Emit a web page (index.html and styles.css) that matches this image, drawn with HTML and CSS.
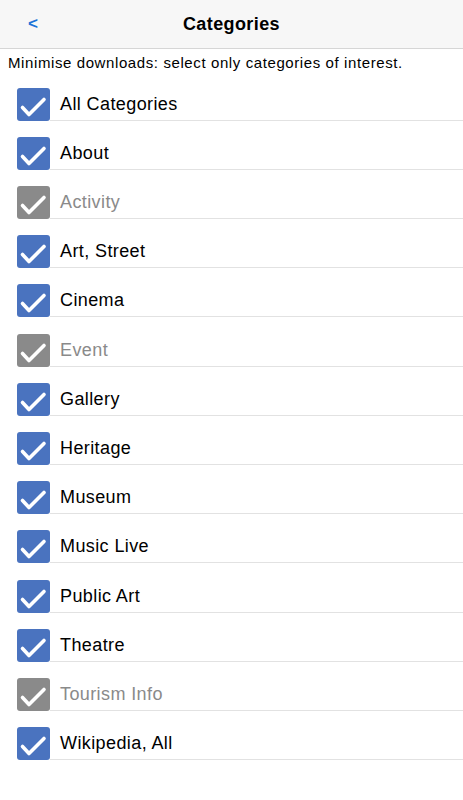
FILE: index.html
```html
<!DOCTYPE html>
<html lang="en">

<head>
    <meta charset="UTF-8">
    <meta name="viewport" content="width=device-width, initial-scale=1.0">
    <title>Categories</title>
    <link rel="stylesheet" href="styles.css">
</head>

<body>
    <div class="nav-bar">
        <span class="back">&lt;</span>
        <h1>Categories</h1>
    </div>

    <p class="hint">Minimise downloads: select only categories of interest.</p>

    <ul class="category-list">
        <li class="row"><span class="box"><svg viewBox="0 0 33 33"><path d="M5.5 19.5 L12 26.5 L27 11.5"/></svg></span><span class="label">All Categories</span></li>
        <li class="row"><span class="box"><svg viewBox="0 0 33 33"><path d="M5.5 19.5 L12 26.5 L27 11.5"/></svg></span><span class="label">About</span></li>
        <li class="row disabled"><span class="box"><svg viewBox="0 0 33 33"><path d="M5.5 19.5 L12 26.5 L27 11.5"/></svg></span><span class="label">Activity</span></li>
        <li class="row"><span class="box"><svg viewBox="0 0 33 33"><path d="M5.5 19.5 L12 26.5 L27 11.5"/></svg></span><span class="label">Art, Street</span></li>
        <li class="row"><span class="box"><svg viewBox="0 0 33 33"><path d="M5.5 19.5 L12 26.5 L27 11.5"/></svg></span><span class="label">Cinema</span></li>
        <li class="row disabled"><span class="box"><svg viewBox="0 0 33 33"><path d="M5.5 19.5 L12 26.5 L27 11.5"/></svg></span><span class="label">Event</span></li>
        <li class="row"><span class="box"><svg viewBox="0 0 33 33"><path d="M5.5 19.5 L12 26.5 L27 11.5"/></svg></span><span class="label">Gallery</span></li>
        <li class="row"><span class="box"><svg viewBox="0 0 33 33"><path d="M5.5 19.5 L12 26.5 L27 11.5"/></svg></span><span class="label">Heritage</span></li>
        <li class="row"><span class="box"><svg viewBox="0 0 33 33"><path d="M5.5 19.5 L12 26.5 L27 11.5"/></svg></span><span class="label">Museum</span></li>
        <li class="row"><span class="box"><svg viewBox="0 0 33 33"><path d="M5.5 19.5 L12 26.5 L27 11.5"/></svg></span><span class="label">Music Live</span></li>
        <li class="row"><span class="box"><svg viewBox="0 0 33 33"><path d="M5.5 19.5 L12 26.5 L27 11.5"/></svg></span><span class="label">Public Art</span></li>
        <li class="row"><span class="box"><svg viewBox="0 0 33 33"><path d="M5.5 19.5 L12 26.5 L27 11.5"/></svg></span><span class="label">Theatre</span></li>
        <li class="row disabled"><span class="box"><svg viewBox="0 0 33 33"><path d="M5.5 19.5 L12 26.5 L27 11.5"/></svg></span><span class="label">Tourism Info</span></li>
        <li class="row"><span class="box"><svg viewBox="0 0 33 33"><path d="M5.5 19.5 L12 26.5 L27 11.5"/></svg></span><span class="label">Wikipedia, All</span></li>
    </ul>
</body>

</html>
```

FILE: styles.css
```css
/* General */
body {
    font-family: 'Liberation Sans', Arial, sans-serif;
    margin: 0;
    padding: 0;
    background-color: #fff;
    color: #000;
}

.nav-bar {
    position: relative;
    height: 48px;
    background-color: #f7f7f7;
    border-bottom: 1px solid #d6d6d6;
    display: flex;
    align-items: center;
    justify-content: center;
}

.nav-bar h1 {
    margin: 0;
    font-size: 18px;
    font-weight: bold;
    letter-spacing: 0.4px;
}

.back {
    position: absolute;
    left: 28px;
    top: 14px;
    color: #1b73d8;
    font-size: 17px;
    font-weight: bold;
}

.hint {
    font-size: 15px;
    margin: 0;
    padding: 5px 0 0 8px;
    line-height: 17px;
    letter-spacing: 0.6px;
}

/* List */
.category-list {
    list-style: none;
    margin: 0;
    padding: 0;
}

.row {
    display: flex;
    align-items: flex-end;
    height: 49.23px;
    padding-left: 17px;
}

.row:first-child {
    height: 49.5px;
}

.box {
    width: 33px;
    height: 33px;
    border-radius: 3px;
    background-color: #4a73bf;
    flex-shrink: 0;
}

.box svg {
    display: block;
    width: 33px;
    height: 33px;
}

.box path {
    fill: none;
    stroke: #fff;
    stroke-width: 3.6;
    stroke-linecap: round;
    stroke-linejoin: round;
}

.label {
    flex: 1;
    height: 31px;
    display: flex;
    align-items: center;
    padding: 2px 0 0 10px;
    font-size: 18px;
    letter-spacing: 0.4px;
    border-bottom: 1px solid #e2e2e2;
}

.disabled .box {
    background-color: #8a8a8a;
}

.disabled .label {
    color: #8a8a8a;
}
```
